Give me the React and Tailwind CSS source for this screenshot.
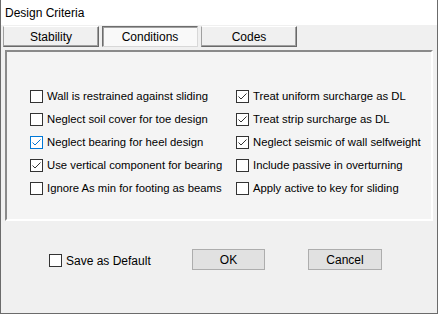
const left = [
  { label: 'Wall is restrained against sliding', checked: false },
  { label: 'Neglect soil cover for toe design', checked: false },
  { label: 'Neglect bearing for heel design', checked: true, focus: true },
  { label: 'Use vertical component for bearing', checked: true },
  { label: 'Ignore As min for footing as beams', checked: false },
];

const right = [
  { label: 'Treat uniform surcharge as DL', checked: true },
  { label: 'Treat strip surcharge as DL', checked: true },
  { label: 'Neglect seismic of wall selfweight', checked: true },
  { label: 'Include passive in overturning', checked: false },
  { label: 'Apply active to key for sliding', checked: false },
];

function Box({ checked, focus }) {
  const color = focus ? '#0078d7' : '#333333';
  return (
    <span
      className={`w-[13px] h-[13px] shrink-0 border bg-white flex items-center justify-center ${focus ? 'border-[#0078d7]' : 'border-[#333333]'}`}
    >
      {checked && (
        <svg width="11" height="11" viewBox="0 0 11 11">
          <polyline points="1.5,5.5 4,8 9.5,2.5" fill="none" stroke={color} strokeWidth="1" />
        </svg>
      )}
    </span>
  );
}

function Check({ label, checked, focus }) {
  return (
    <div className="h-[23px] flex items-center gap-[4px]">
      <Box checked={checked} focus={focus} />
      <span className="whitespace-nowrap">{label}</span>
    </div>
  );
}

function Tab({ label, active }) {
  return (
    <div
      className={`w-[96px] h-[21px] flex items-center justify-center border ${
        active
          ? 'bg-[#f9f9f9] border-t-[#6d6d6d] border-l-[#6d6d6d] border-r-[#d8d8d8] border-b-[#d8d8d8] shadow-[inset_1px_1px_0_#a0a0a0]'
          : 'bg-[#f0f0f0] border-t-[#ffffff] border-l-[#a0a0a0] border-r-[#696969] border-b-[#696969] shadow-[inset_-1px_-1px_0_#a0a0a0]'
      }`}
    >
      {label}
    </div>
  );
}

export default function App() {
  return (
    <div
      className="w-[438px] h-[314px] border border-t-0 border-[#6b6b6b] bg-[#f0f0f0] flex flex-col text-[11.3px] text-black overflow-hidden"
      style={{ fontFamily: '"Liberation Sans", Arial, sans-serif' }}
    >
      <div className="h-[25px] bg-white pl-[4px] flex items-center text-[12px]">Design Criteria</div>

      <div className="flex gap-[3px] pl-[2px] mt-[1px] text-[12px]">
        <Tab label="Stability" />
        <Tab label="Conditions" active />
        <Tab label="Codes" />
      </div>

      <div className="ml-[4px] mt-[3px] w-[428px] h-[171px] border-2 border-t-[#8a8a8a] border-l-[#8a8a8a] border-r-white border-b-white bg-[#f4f4f4] pt-[33px] flex">
        <div className="w-[206px] ml-[23px] flex flex-col">
          {left.map((c, i) => (
            <Check key={i} {...c} />
          ))}
        </div>
        <div className="flex flex-col">
          {right.map((c, i) => (
            <Check key={i} {...c} />
          ))}
        </div>
      </div>

      <div className="mt-[28px] h-[21px] flex items-center text-[12px]">
        <div className="ml-[48px] w-[143px] flex items-center gap-[4px] mt-[2px]">
          <Box />
          <span>Save as Default</span>
        </div>
        <button className="w-[73px] h-[21px] bg-[#e1e1e1] border border-[#adadad] flex items-center justify-center">OK</button>
        <button className="ml-[43px] w-[74px] h-[21px] bg-[#e1e1e1] border border-[#adadad] flex items-center justify-center">Cancel</button>
      </div>
    </div>
  );
}
